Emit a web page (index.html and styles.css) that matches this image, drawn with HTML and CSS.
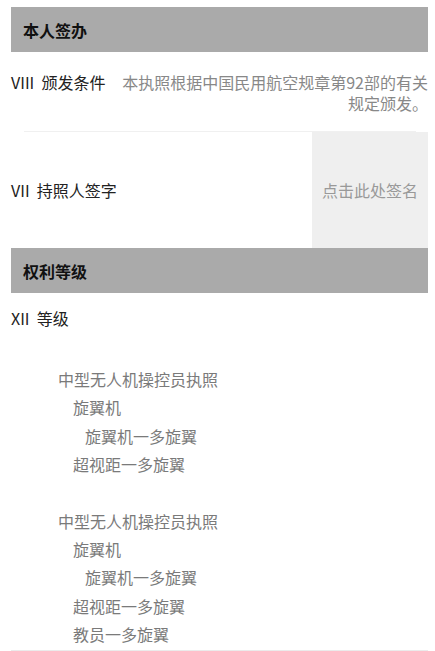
FILE: index.html
```html
<!DOCTYPE html>
<html lang="zh-CN">
<head>
<meta charset="utf-8">
<title>执照</title>
<link rel="stylesheet" href="styles.css">
</head>
<body>
<div class="page">
  <div class="section-head">本人签办</div>
  <div class="row-cond">
    <div class="label">VIII&nbsp; 颁发条件</div>
    <div class="value">本执照根据中国民用航空规章第92部的有关规定颁发。</div>
  </div>
  <div class="sep"></div>
  <div class="row-sign">
    <div class="label">VII&nbsp; 持照人签字</div>
    <div class="sign-box">点击此处签名</div>
  </div>
  <div class="section-head">权利等级</div>
  <div class="grade-label">XII&nbsp; 等级</div>
  <div class="grade-list">
    <div class="g0">中型无人机操控员执照</div>
    <div class="g1">旋翼机</div>
    <div class="g2">旋翼机一多旋翼</div>
    <div class="g1">超视距一多旋翼</div>
    <div class="blank"></div>
    <div class="g0">中型无人机操控员执照</div>
    <div class="g1">旋翼机</div>
    <div class="g2">旋翼机一多旋翼</div>
    <div class="g1">超视距一多旋翼</div>
    <div class="g1">教员一多旋翼</div>
  </div>
</div>
</body>
</html>
```

FILE: styles.css
```css
html, body {
  margin: 0;
  padding: 0;
  background: #ffffff;
}
body {
  font-family: "Noto Sans CJK SC", "Noto Sans", sans-serif;
  font-size: 16px;
  color: #222222;
}
.page {
  padding: 7px 7px 0 11px;
  display: flex;
  flex-direction: column;
}
.section-head {
  height: 45px;
  background: #aaaaaa;
  color: #111111;
  font-weight: bold;
  font-size: 16px;
  display: flex;
  align-items: center;
  padding-left: 12px;
}
.section-head + .grade-label {
  margin-top: 11px;
}
.label {
  white-space: nowrap;
  color: #222222;
}
.row-cond {
  display: flex;
  align-items: flex-start;
  padding: 20px 0 17px;
  line-height: 21px;
}
.row-cond .value {
  flex: 1;
  margin-left: 10px;
  text-align: right;
  color: #888888;
}
.sep {
  height: 1px;
  background: #f0f0f0;
  margin: 0 12px 0 13px;
}
.row-sign {
  display: flex;
  align-items: center;
  justify-content: space-between;
  height: 116px;
}
.sign-box {
  width: 116px;
  height: 100%;
  background: #efefef;
  color: #999999;
  display: flex;
  align-items: center;
  justify-content: center;
}
.grade-label {
  line-height: 28px;
}
.grade-list {
  margin-top: 33px;
  padding-bottom: 2px;
  border-bottom: 1px solid #ebebeb;
  color: #7a7a7a;
  line-height: 28.33px;
}
.blank {
  height: 28.33px;
}
.g0 { padding-left: 47px; }
.g1 { padding-left: 62px; }
.g2 { padding-left: 74px; }
```
